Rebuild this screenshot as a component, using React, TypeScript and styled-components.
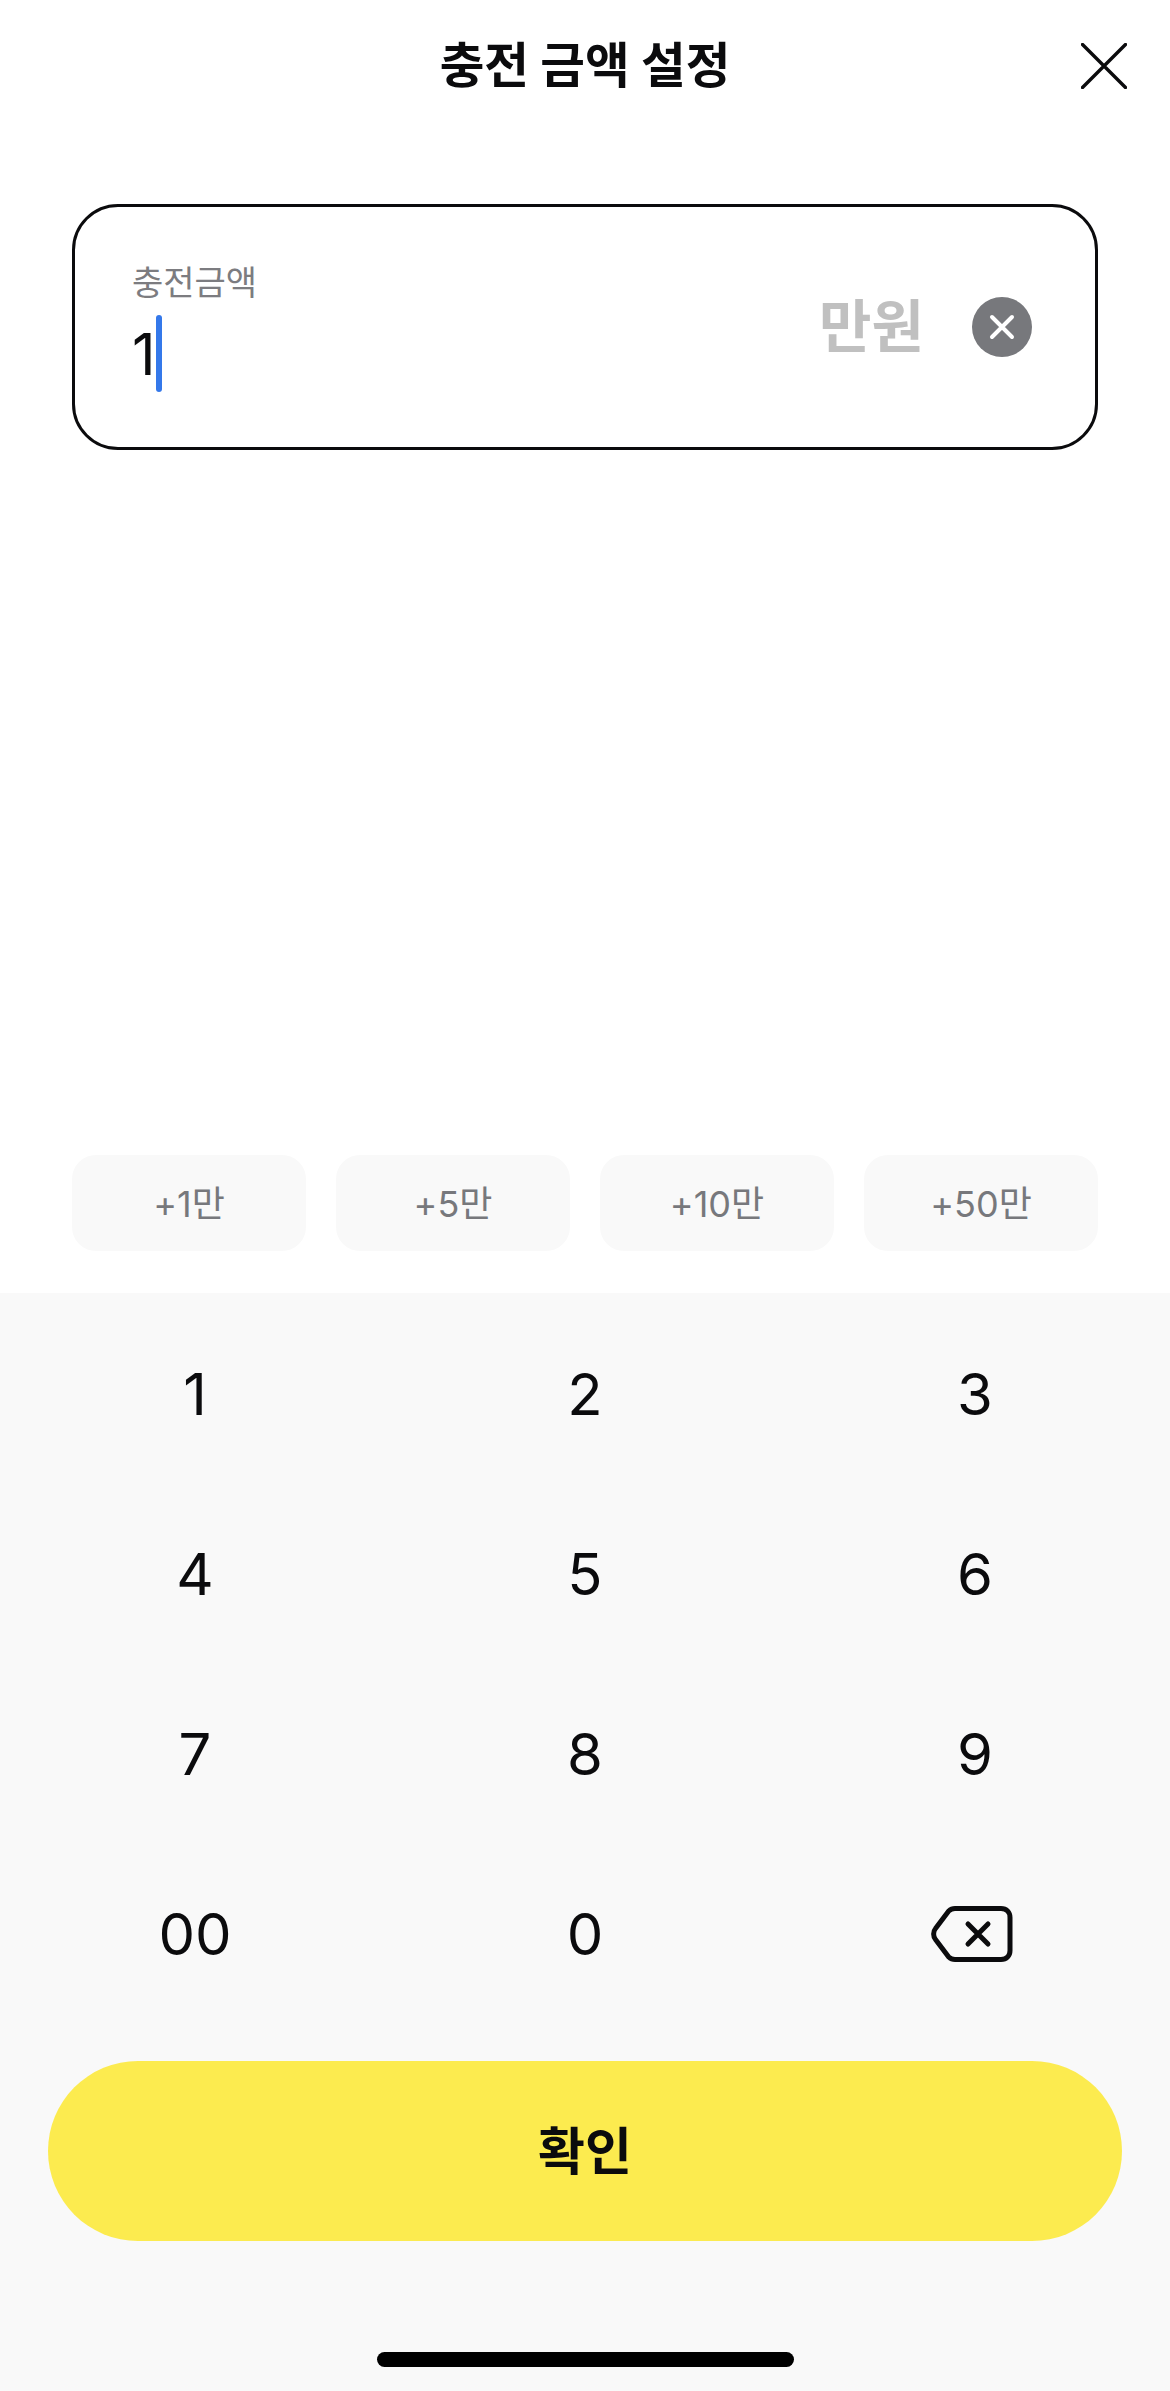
import React from 'react'
import styled, { createGlobalStyle } from 'styled-components'

const GlobalStyle = createGlobalStyle`
  html, body {
    margin: 0;
    padding: 0;
    background: #fff;
    font-family: Inter, "Noto Sans CJK KR", sans-serif;
  }
`

const KEYS = ['1', '2', '3', '4', '5', '6', '7', '8', '9', '00', '0']
const CHIPS = ['+1만', '+5만', '+10만', '+50만']

const App = () => {
  return (
    <Page>
      <GlobalStyle />
      <Header>
        <Title>충전 금액 설정</Title>
        <CloseButton aria-label="닫기">
          <svg width="46" height="46" viewBox="0 0 46 46" fill="none">
            <path d="M1.5 1.5L44.5 44.5M44.5 1.5L1.5 44.5" stroke="#0b0b0d" strokeWidth="3.4" strokeLinecap="round" />
          </svg>
        </CloseButton>
      </Header>

      <InputBox>
        <InputMain>
          <Label>충전금액</Label>
          <ValueRow>
            <Value>1</Value>
            <Caret />
          </ValueRow>
        </InputMain>
        <Unit>만원</Unit>
        <ClearButton aria-label="지우기">
          <svg width="26" height="26" viewBox="0 0 26 26" fill="none">
            <path d="M3 3L23 23M23 3L3 23" stroke="#fff" strokeWidth="4" strokeLinecap="round" />
          </svg>
        </ClearButton>
      </InputBox>

      <Chips>
        {CHIPS.map((chip) => (
          <Chip key={chip}>{chip}</Chip>
        ))}
      </Chips>

      <Bottom>
        <Keypad>
          {KEYS.map((key) => (
            <Key key={key}>{key}</Key>
          ))}
          <Key aria-label="삭제">
            <BackspaceIcon width="82" height="58" viewBox="0 0 82 58" fill="none">
              <path
                d="M24 3.5H70C75.5 3.5 79 7 79 12.5V45.5C79 51 75.5 54.5 70 54.5H24C21.5 54.5 19.5 53.7 17.7 52L4.5 34.5C2 31.5 2 26.5 4.5 23.5L17.7 6C19.5 4.3 21.5 3.5 24 3.5Z"
                stroke="#0b0b0d"
                strokeWidth="5"
                strokeLinejoin="round"
              />
              <path d="M37 19L57 39M57 19L37 39" stroke="#0b0b0d" strokeWidth="5" strokeLinecap="round" />
            </BackspaceIcon>
          </Key>
        </Keypad>
        <ConfirmButton>확인</ConfirmButton>
        <HomeBar />
      </Bottom>
    </Page>
  )
}

const Page = styled.div`
  width: 1170px;
  height: 2391px;
  display: flex;
  flex-direction: column;
  overflow: hidden;
  background: #fff;
`

const Header = styled.header`
  position: relative;
  height: 130px;
  display: flex;
  justify-content: center;
`

const Title = styled.h1`
  margin: 0;
  padding-top: 34px;
  font-size: 48.5px;
  line-height: 64px;
  font-weight: 700;
  color: #0b0b0d;
`

const CloseButton = styled.button`
  position: absolute;
  top: 43px;
  right: 43px;
  width: 46px;
  height: 46px;
  padding: 0;
  border: none;
  background: transparent;
  display: flex;
`

const InputBox = styled.div`
  box-sizing: border-box;
  width: 1026px;
  height: 246px;
  margin: 74px 0 0 72px;
  padding: 0 63px 0 57px;
  display: flex;
  align-items: center;
  border: 3px solid #0b0b0d;
  border-radius: 46px;
`

const InputMain = styled.div`
  flex: 1;
  display: flex;
  flex-direction: column;
`

const Label = styled.span`
  font-size: 34px;
  line-height: 44px;
  color: #7c7c80;
`

const ValueRow = styled.div`
  display: flex;
  align-items: center;
  height: 78px;
  margin-top: 10px;
`

const Value = styled.span`
  font-size: 58px;
  line-height: 78px;
  color: #0b0b0d;
`

const Caret = styled.i`
  display: block;
  width: 6px;
  height: 77px;
  margin-top: -2px;
  border-radius: 3px;
  background: #3478ea;
`

const Unit = styled.span`
  font-size: 57px;
  font-weight: 600;
  line-height: 60px;
  color: #c0c0c0;
  margin-right: 48px;
`

const ClearButton = styled.button`
  width: 60px;
  height: 60px;
  padding: 0;
  border: none;
  border-radius: 50%;
  background: #77787c;
  display: flex;
  align-items: center;
  justify-content: center;
`

const Chips = styled.div`
  display: flex;
  gap: 30px;
  margin: 705px 72px 0;
`

const Chip = styled.button`
  flex: 1;
  height: 96px;
  padding: 0 0 4px;
  border: none;
  border-radius: 24px;
  background: #f9f9f9;
  font-family: inherit;
  font-size: 36px;
  color: #77787c;
`

const Bottom = styled.section`
  flex: 1;
  margin-top: 42px;
  padding-top: 11px;
  display: flex;
  flex-direction: column;
  align-items: center;
  background: #f9f9f9;
`

const Keypad = styled.div`
  width: 100%;
  display: grid;
  grid-template-columns: repeat(3, 1fr);
  grid-auto-rows: 180px;
`

const Key = styled.button`
  padding: 0;
  border: none;
  background: transparent;
  display: flex;
  align-items: center;
  justify-content: center;
  font-family: inherit;
  font-size: 58px;
  color: #0b0b0d;
`

const BackspaceIcon = styled.svg`
  margin-right: 6px;
`

const ConfirmButton = styled.button`
  width: 1074px;
  height: 180px;
  margin-top: 37px;
  padding: 0 0 7px;
  border: none;
  border-radius: 90px;
  background: #fceb4f;
  font-family: inherit;
  font-size: 51px;
  font-weight: 700;
  color: #0b0b0d;
`

const HomeBar = styled.div`
  width: 417px;
  height: 15px;
  margin-top: 111px;
  border-radius: 8px;
  background: #000;
`

export default App
